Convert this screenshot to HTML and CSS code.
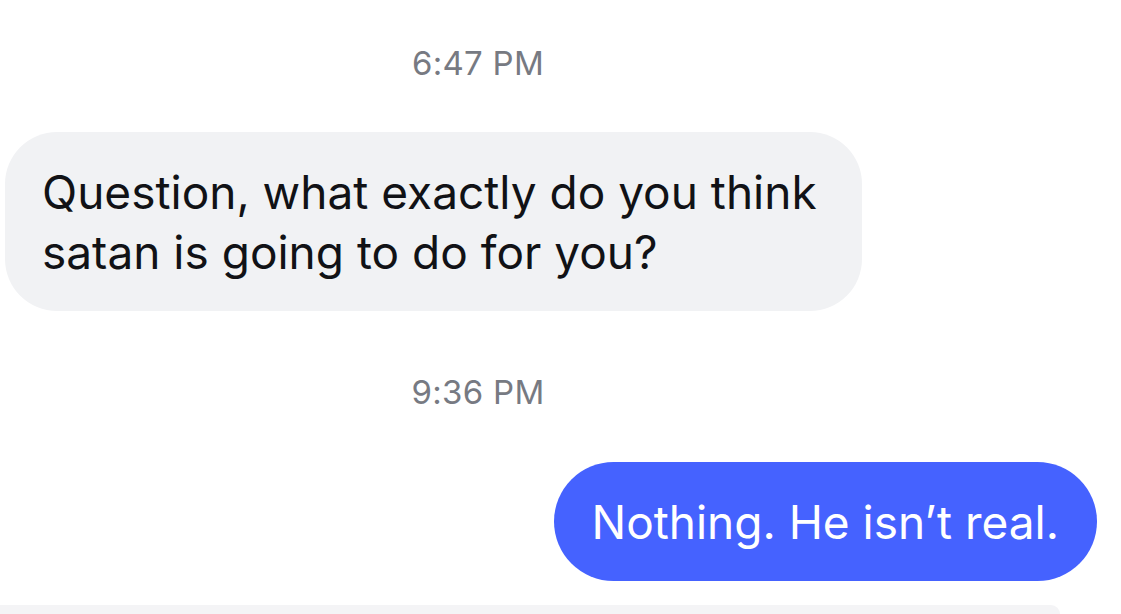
FILE: index.html
```html
<!DOCTYPE html>
<html lang="en">
<head>
<meta charset="utf-8">
<title>Chat</title>
<link rel="stylesheet" href="styles.css">
</head>
<body>
<main class="chat">
  <div class="stamp">6:47 PM</div>
  <div class="bubble incoming">Question, what exactly do you think satan is going to do for you?</div>
  <div class="stamp stamp-second">9:36 PM</div>
  <div class="bubble outgoing">Nothing. He isn’t real.</div>
  <div class="composer"></div>
</main>
</body>
</html>
```

FILE: styles.css
```css
html, body {
  margin: 0;
  padding: 0;
  background: #ffffff;
  overflow: hidden;
}

body {
  width: 1121px;
  height: 614px;
  font-family: "Inter", "Roboto", "Liberation Sans", sans-serif;
}

.chat {
  display: flex;
  flex-direction: column;
  height: 614px;
  padding-top: 43px;
  box-sizing: border-box;
}

.stamp {
  height: 40px;
  line-height: 40px;
  font-size: 33px;
  color: #777a82;
  text-align: center;
  padding-right: 165px;
  letter-spacing: 0.3px;
}

.stamp-second {
  margin-top: 61px;
}

.bubble {
  font-size: 46px;
  line-height: 60px;
  letter-spacing: 0;
  box-sizing: border-box;
}

.incoming {
  margin-top: 49px;
  margin-left: 5px;
  width: 857px;
  padding: 30px 30px 29px 37px;
  background: #f1f2f4;
  color: #111216;
  border-radius: 52px;
}

.outgoing {
  margin-top: 50px;
  align-self: flex-end;
  margin-right: 24px;
  padding: 30px 38px 29px 37px;
  background: #4562ff;
  color: #ffffff;
  border-radius: 60px;
}

.composer {
  margin-top: 24px;
  width: 1060px;
  flex: 1;
  background: #f4f4f6;
  border-top-right-radius: 34px;
}
```
